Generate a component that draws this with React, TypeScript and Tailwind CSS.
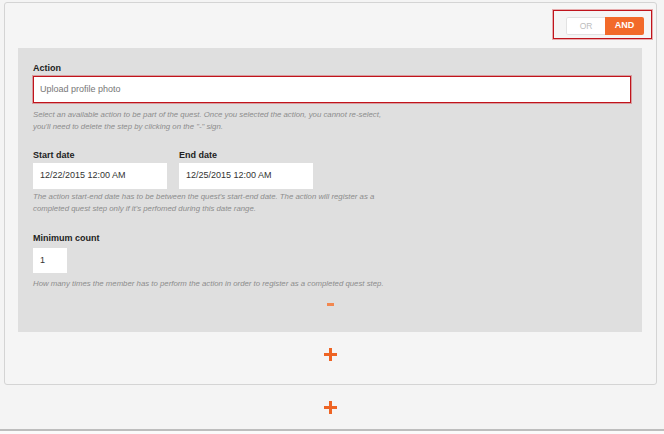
// Quest step editor: action, date range, minimum count
function Plus() {
  return (
    <svg width="13" height="13" viewBox="0 0 13 13" className="block">
      <rect x="5" y="0" width="3" height="13" fill="#ee6424" />
      <rect x="0" y="5" width="13" height="3" fill="#ee6424" />
    </svg>
  );
}

function Help({ children, className = "" }: { children: React.ReactNode; className?: string }) {
  return <p className={`text-[7.8px] italic leading-[12px] text-[#8c8c8c] ${className}`}>{children}</p>;
}

function Label({ children }: { children: React.ReactNode }) {
  return <div className="h-[13px] text-[9px] font-bold leading-[13px] text-[#222]">{children}</div>;
}

export default function App() {
  return (
    <div className="h-[434px] w-[664px] overflow-hidden bg-[#f4f4f4] font-['Liberation_Sans',Arial,sans-serif]">
      {/* Outer card */}
      <div className="ml-[4px] mr-[7px] mt-[2px] flex h-[383px] flex-col rounded-[3px] border border-[#d4d4d4] bg-[#f5f5f5]">
        {/* OR / AND toggle */}
        <div className="flex justify-end pr-[4px] pt-[7px]">
          <div className="flex h-[29px] w-[99px] items-start border border-[#c0141c] pl-[12px] pt-[6px] shadow-[0_0_0_1px_rgba(204,34,41,0.35)]">
            <div className="flex h-[18px] w-[78px] overflow-hidden rounded-[2px]">
              <div className="flex w-[39px] items-center justify-center rounded-l-[2px] border border-r-0 border-[#e2e2e2] bg-white text-[8.5px] text-[#bdbdbd]">
                OR
              </div>
              <div className="flex w-[39px] items-center justify-center bg-[#f26a2a] text-[9px] font-bold text-white">
                AND
              </div>
            </div>
          </div>
        </div>

        {/* Step panel */}
        <div className="ml-[13px] mr-[14px] mt-[9px] h-[284px] bg-[#dfdfdf] pl-[15px] pt-[14px]">
          <Label>Action</Label>
          <div className="mt-px flex h-[27px] w-[598px] items-center border border-[#c0141c] bg-white pl-[6px] text-[9px] text-[#777] shadow-[0_0_0_1px_rgba(204,34,41,0.35)]">
            Upload profile photo
          </div>
          <Help className="mt-[6px]">
            Select an available action to be part of the quest. Once you selected the action, you cannot re-select,
            <br />
            you'll need to delete the step by clicking on the "-" sign.
          </Help>

          <div className="mt-[16px] flex gap-[12px]">
            <div>
              <Label>Start date</Label>
              <div className="mt-px flex h-[26px] w-[134px] items-center bg-white pl-[7px] text-[9px] text-[#333]">
                12/22/2015 12:00 AM
              </div>
            </div>
            <div>
              <Label>End date</Label>
              <div className="mt-px flex h-[26px] w-[134px] items-center bg-white pl-[7px] text-[9px] text-[#333]">
                12/25/2015 12:00 AM
              </div>
            </div>
          </div>
          <Help className="mt-[2px]">
            The action start-end date has to be between the quest's start-end date. The action will register as a
            <br />
            completed quest step only if it's perfomed during this date range.
          </Help>

          <div className="mt-[17px]">
            <Label>Minimum count</Label>
            <div className="mt-[3px] flex h-[25px] w-[34px] items-center bg-white pl-[7px] text-[9px] text-[#333]">
              1
            </div>
          </div>
          <Help className="mt-[5px]">
            How many times the member has to perform the action in order to register as a completed quest step.
          </Help>

          <div className="mt-[13px] flex justify-center pr-[15px]">
            <div className="h-[3px] w-[7px] bg-[#f2874f]" />
          </div>
        </div>

        <div className="mt-[16px] flex justify-center">
          <Plus />
        </div>
      </div>

      <div className="ml-[4px] mr-[7px] mt-[16px] flex justify-center">
        <Plus />
      </div>

      <div className="mt-[15px] h-[2px] bg-[#bdbdbd]" />
      <div className="h-[10px] bg-[#fafafa]" />
    </div>
  );
}
